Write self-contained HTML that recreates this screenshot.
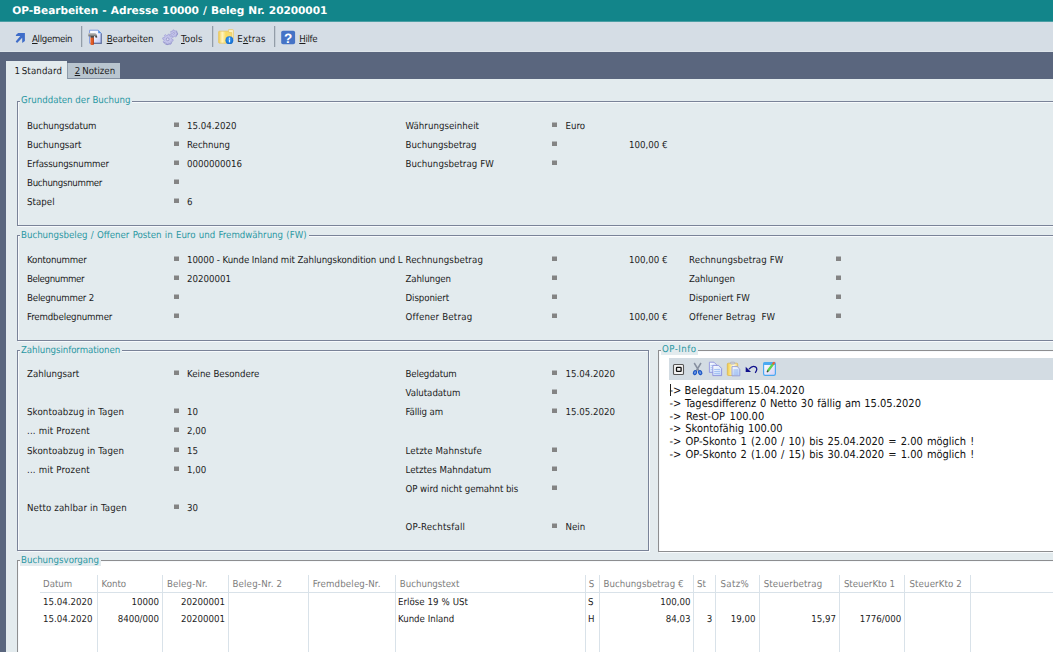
<!DOCTYPE html>
<html lang="de"><head><meta charset="utf-8"><title>OP-Bearbeiten</title>
<style>
html,body{margin:0;padding:0}
body{width:1053px;height:652px;overflow:hidden;position:relative;background:#e3ebee;font-family:"DejaVu Sans Condensed","Liberation Sans",sans-serif;font-size:9.6px;color:#1c1c1c;text-rendering:geometricPrecision}
.t{position:absolute;white-space:nowrap;line-height:12px;height:12px}
.b{position:absolute;width:5px;height:4px;background:#848484;border-top:1px solid #b4b8ba}
#title{position:absolute;left:0;top:0;width:1053px;height:21px;background:#12858a;border-bottom:1px solid #4b9ea4}
#title .t{color:#fff;font-weight:bold;font-family:"DejaVu Sans","Liberation Sans",sans-serif;font-size:10.6px;line-height:13px;height:13px}
#tb{position:absolute;left:0;top:22px;width:1053px;height:30px;background:#d5dde5;border-bottom:1px solid #dde4ea;box-sizing:border-box}
#band{position:absolute;left:0;top:52px;width:1053px;height:27px;background:#5a667e}
#edge{position:absolute;left:0;top:52px;width:6px;height:600px;background:#5a667e}
#tab1{position:absolute;left:6px;top:61px;width:61px;height:20px;background:#e3ebee}
#tab2{position:absolute;left:67px;top:63px;width:53px;height:16px;background:#b9c5cf;box-sizing:border-box;border-left:1px solid #8f9caa;border-bottom:1px solid #8592a3}
.gb{position:absolute;border:1px solid #7a8398;box-sizing:border-box;box-shadow:1px 1px 0 #f7fafc, inset 1px 1px 0 #f7fafc}
.lg{position:absolute;white-space:nowrap;line-height:9.5px;height:9.5px;color:#2b98a3;background:#e3ebee;padding:0 2px 0 1px}
.sep{position:absolute;top:26px;width:1px;height:21px;background:#939da8;box-shadow:1px 0 0 #c3ccd5}
u{text-decoration:underline}
#grid{position:absolute;left:18px;top:561px;width:1035px;height:91px;background:#fff}
.vl{position:absolute;top:575px;width:1px;height:77px;background:#d9e2e9}
#hl{position:absolute;left:40px;top:592px;width:1013px;height:1px;background:#d9e2e9}
.h{color:#7d7d7d}
#opw{position:absolute;left:659px;top:351px;width:394px;height:200px;background:#fff}
#optb{position:absolute;left:669px;top:358px;width:384px;height:22px;background:#d3dce3}
.o{font-size:11px;line-height:13px;height:13px;color:#111}
.ic{position:absolute}
</style></head><body>
<div id="title"><div class="t" style="left:12.3px;top:4.93px;word-spacing:0.5px;letter-spacing:-0.07px">OP-Bearbeiten - Adresse 10000 / Beleg Nr. 20200001</div>
</div>
<div id="tb"></div>
<div class="t" style="left:32px;top:33.78px;letter-spacing:-0.32px"><u>A</u>llgemein</div>
<div class="t" style="left:106.7px;top:33.78px;letter-spacing:-0.08px"><u>B</u>earbeiten</div>
<div class="t" style="left:181px;top:33.78px;letter-spacing:0.1px"><u>T</u>ools</div>
<div class="t" style="left:237.3px;top:33.78px;letter-spacing:0.2px">E<u>x</u>tras</div>
<div class="t" style="left:299.3px;top:33.78px;letter-spacing:-0.35px"><u>H</u>ilfe</div>
<div class="sep" style="left:81px"></div>
<div class="sep" style="left:212px"></div>
<div class="sep" style="left:274px"></div>
<svg class="ic" style="left:0;top:21px" width="330" height="31" viewBox="0 21 330 31">
<defs>
<linearGradient id="gdoc" x1="0" y1="0" x2="1" y2="1"><stop offset="0" stop-color="#ffffff"/><stop offset="0.45" stop-color="#f4f4ff"/><stop offset="1" stop-color="#b9c3f2"/></linearGradient>
<linearGradient id="ghd" x1="0" y1="0" x2="0" y2="1"><stop offset="0" stop-color="#c9c9c9"/><stop offset="0.5" stop-color="#8a8a8a"/><stop offset="1" stop-color="#151515"/></linearGradient>
<linearGradient id="ghn" x1="0" y1="0" x2="1" y2="0"><stop offset="0" stop-color="#e0521c"/><stop offset="0.5" stop-color="#e8662c"/><stop offset="1" stop-color="#a92a08"/></linearGradient>
<linearGradient id="gfo" x1="0" y1="0" x2="1" y2="0"><stop offset="0" stop-color="#f1c94e"/><stop offset="0.28" stop-color="#fff4c0"/><stop offset="0.55" stop-color="#f8dc62"/><stop offset="1" stop-color="#f6db7a"/></linearGradient>
<radialGradient id="gbl" cx="0.45" cy="0.4" r="0.7"><stop offset="0" stop-color="#3aa0f4"/><stop offset="1" stop-color="#0a5fc8"/></radialGradient>
</defs>
<!-- arrow -->
<polygon points="18.1,33.1 24.9,33.1 24.9,40.9 22.2,42.9 22.2,37.8 17.1,43.1 15.7,41.5 20.3,36.1 15.9,36.1 15.9,35" fill="#3f6dc9"/>
<!-- document + hammer -->
<path d="M89.6,30.2 H98.2 L101.2,33.2 V43.3 H89.6 Z" fill="url(#gdoc)" stroke="#7f9ade" stroke-width="1"/>
<path d="M98.2,30.2 L101.2,33.2 H98.2 Z" fill="#4f8fe6"/>
<path d="M101.3,33.5 V43.4 H93.5" fill="none" stroke="#66759f" stroke-width="1.1"/>
<rect x="90.5" y="37.2" width="3.4" height="7.7" rx="0.9" fill="url(#ghn)"/>
<path d="M88.3,33.6 Q88.3,33 89,33 H94.5 Q97.3,33.2 97.2,37.6 H95.6 Q95.6,35.8 94,35.9 V37.4 H90.4 V36.2 H88.3 Z" fill="url(#ghd)"/>
<!-- gears -->
<g stroke-linejoin="round">
<path d="M171.79,39.20 L173.19,39.71 L172.89,41.17 L171.41,41.10 L170.80,42.01 L171.42,43.36 L170.18,44.19 L169.18,43.08 L168.10,43.29 L167.59,44.69 L166.13,44.39 L166.20,42.91 L165.29,42.30 L163.94,42.92 L163.11,41.68 L164.22,40.68 L164.01,39.60 L162.61,39.09 L162.91,37.63 L164.39,37.70 L165.00,36.79 L164.38,35.44 L165.62,34.61 L166.62,35.72 L167.70,35.51 L168.21,34.11 L169.67,34.41 L169.60,35.89 L170.51,36.50 L171.86,35.88 L172.69,37.12 L171.58,38.12Z" fill="#c3c3ea" stroke="#a6a6d8" stroke-width="0.9"/>
<path d="M163.8,42.4 A5.1,5.1 0 0 0 172.2,42.2" fill="none" stroke="#8c8cc6" stroke-width="0.8"/>
<circle cx="167.7" cy="39.3" r="1.4" fill="#dcdcf4" stroke="#8a8ac2" stroke-width="0.7"/>
<path d="M176.55,33.10 L177.59,33.37 L177.47,34.56 L176.40,34.62 L175.95,35.36 L176.38,36.35 L175.38,36.99 L174.66,36.19 L173.80,36.30 L173.30,37.25 L172.17,36.87 L172.35,35.81 L171.73,35.20 L170.67,35.41 L170.26,34.29 L171.21,33.77 L171.29,32.90 L170.47,32.20 L171.09,31.19 L172.09,31.60 L172.82,31.13 L172.86,30.05 L174.04,29.90 L174.34,30.94 L175.16,31.21 L176.02,30.57 L176.88,31.40 L176.26,32.28Z" fill="#c3c3ea" stroke="#a6a6d8" stroke-width="0.9"/>
<path d="M176.6,31.4 A3.6,3.6 0 0 1 176.3,36.2" fill="none" stroke="#8c8cc6" stroke-width="0.8"/>
<circle cx="173.7" cy="33.4" r="0.9" fill="#d8d8f2" stroke="#9090c8" stroke-width="0.6"/>
</g>
<!-- folder + info -->
<path d="M228.6,29.6 H232.6 Q233.4,29.6 233.4,30.4 V39 H228.6 Z" fill="#fdf3c2" stroke="#e9c868" stroke-width="0.8"/>
<path d="M218.6,32 Q218.6,31.2 219.4,31.2 H228 L229,32.6 H231.8 V43.2 H219.6 Q218.6,43.2 218.6,42.2 Z" fill="url(#gfo)" stroke="#e8c45a" stroke-width="0.7"/>
<circle cx="229.4" cy="40.2" r="3.9" fill="url(#gbl)"/>
<rect x="228.9" y="39.4" width="1.2" height="3" fill="#e8f4ff"/><rect x="228.9" y="37.6" width="1.2" height="1.2" fill="#e8f4ff"/>
<!-- help -->
<rect x="281.2" y="30.7" width="13.9" height="13.5" rx="1.8" fill="#4573c6"/>
<text x="288.2" y="42.7" font-family="Liberation Sans, sans-serif" font-weight="bold" font-size="13.5" fill="#ffffff" text-anchor="middle">?</text>
</svg>

<div id="band"></div><div id="edge"></div><div id="tab2"></div><div id="tab1"></div>
<div class="t" style="left:14.5px;top:65.78px;word-spacing:-1.3px;letter-spacing:0.15px">1 Standard</div>
<div class="t" style="left:74.7px;top:65.78px;word-spacing:-0.6px"><u>2</u> Notizen</div>
<div class="gb" style="left:17px;top:101px;width:1050px;height:125px;border-color:#7a8398"></div>
<div class="lg" style="left:20px;top:96.03px;">Grunddaten der Buchung</div>
<div class="gb" style="left:17px;top:235px;width:1050px;height:106px;border-color:#7a8398"></div>
<div class="lg" style="left:20px;top:231.03px;word-spacing:0.55px;">Buchungsbeleg / Offener Posten in Euro und Fremdwährung (FW)</div>
<div class="gb" style="left:17px;top:350px;width:632px;height:201px;border-color:#7a8398"></div>
<div class="lg" style="left:20px;top:346.03px;letter-spacing:-0.07px;">Zahlungsinformationen</div>
<div id="opw"></div><div id="optb"></div>
<div class="gb" style="left:658px;top:350px;width:400px;height:202px;border-color:#8d8e90"></div>
<div class="lg" style="left:661px;top:345.03px;letter-spacing:0.45px;">OP-Info</div>
<div id="grid"></div>
<div class="gb" style="left:17px;top:560px;width:1050px;height:100px;border-color:#8d8e90"></div>
<div class="lg" style="left:20px;top:556.03px;">Buchungsvorgang</div>
<div class="t" style="left:27px;top:120.78px;letter-spacing:-0.086px">Buchungsdatum</div>
<i class="b" style="left:174px;top:122px"></i>
<div class="t" style="left:187px;top:120.78px;">15.04.2020</div>
<div class="t" style="left:27px;top:139.78px;letter-spacing:-0.028px">Buchungsart</div>
<i class="b" style="left:174px;top:141px"></i>
<div class="t" style="left:187px;top:139.78px;">Rechnung</div>
<div class="t" style="left:27px;top:158.78px;letter-spacing:-0.128px">Erfassungsnummer</div>
<i class="b" style="left:174px;top:160px"></i>
<div class="t" style="left:187px;top:158.78px;">0000000016</div>
<div class="t" style="left:27px;top:177.78px;letter-spacing:-0.293px">Buchungsnummer</div>
<i class="b" style="left:174px;top:179px"></i>
<div class="t" style="left:27px;top:196.78px;letter-spacing:0.050px">Stapel</div>
<i class="b" style="left:174px;top:198px"></i>
<div class="t" style="left:187px;top:196.78px;">6</div>
<div class="t" style="left:405.5px;top:120.78px;letter-spacing:0.040px">Währungseinheit</div>
<i class="b" style="left:552px;top:122px"></i>
<div class="t" style="left:565.5px;top:120.78px;">Euro</div>
<div class="t" style="left:405.5px;top:139.78px;letter-spacing:0.006px">Buchungsbetrag</div>
<i class="b" style="left:552px;top:141px"></i>
<div class="t" style="right:385.5px;top:139.78px;">100,00 €</div>
<div class="t" style="left:405.5px;top:158.78px;letter-spacing:0.058px">Buchungsbetrag FW</div>
<i class="b" style="left:552px;top:160px"></i>
<div class="t" style="left:27px;top:254.78px;letter-spacing:-0.141px">Kontonummer</div>
<i class="b" style="left:174px;top:256px"></i>
<div class="t" style="left:187px;top:254.78px;letter-spacing:-0.062px">10000 - Kunde Inland mit Zahlungskondition und L</div>
<div class="t" style="left:27px;top:273.78px;letter-spacing:-0.346px">Belegnummer</div>
<i class="b" style="left:174px;top:275px"></i>
<div class="t" style="left:187px;top:273.78px;">20200001</div>
<div class="t" style="left:27px;top:292.78px;letter-spacing:-0.169px">Belegnummer 2</div>
<i class="b" style="left:174px;top:294px"></i>
<div class="t" style="left:27px;top:311.78px;letter-spacing:-0.136px">Fremdbelegnummer</div>
<i class="b" style="left:174px;top:313px"></i>
<div class="t" style="left:405.5px;top:254.78px;letter-spacing:0.100px">Rechnungsbetrag</div>
<i class="b" style="left:552px;top:256px"></i>
<div class="t" style="right:385.5px;top:254.78px;">100,00 €</div>
<div class="t" style="left:405.5px;top:273.78px;letter-spacing:-0.100px">Zahlungen</div>
<i class="b" style="left:552px;top:275px"></i>
<div class="t" style="left:405.5px;top:292.78px;letter-spacing:-0.085px">Disponiert</div>
<i class="b" style="left:552px;top:294px"></i>
<div class="t" style="left:405.5px;top:311.78px;letter-spacing:0.189px">Offener Betrag</div>
<i class="b" style="left:552px;top:313px"></i>
<div class="t" style="right:385.5px;top:311.78px;">100,00 €</div>
<div class="t" style="left:689px;top:254.78px;letter-spacing:0.125px">Rechnungsbetrag FW</div>
<i class="b" style="left:836px;top:256px"></i>
<div class="t" style="left:689px;top:273.78px;letter-spacing:-0.050px">Zahlungen</div>
<i class="b" style="left:836px;top:275px"></i>
<div class="t" style="left:689px;top:292.78px;letter-spacing:0.001px">Disponiert FW</div>
<i class="b" style="left:836px;top:294px"></i>
<div class="t" style="left:689px;top:311.78px;letter-spacing:0.176px">Offener Betrag&nbsp; FW</div>
<i class="b" style="left:836px;top:313px"></i>
<div class="t" style="left:27px;top:368.78px;letter-spacing:-0.006px">Zahlungsart</div>
<i class="b" style="left:174px;top:370px"></i>
<div class="t" style="left:187px;top:368.78px;">Keine Besondere</div>
<div class="t" style="left:27px;top:406.78px;letter-spacing:0.140px">Skontoabzug in Tagen</div>
<i class="b" style="left:174px;top:408px"></i>
<div class="t" style="left:187px;top:406.78px;">10</div>
<div class="t" style="left:27px;top:425.78px;letter-spacing:0.180px">... mit Prozent</div>
<i class="b" style="left:174px;top:427px"></i>
<div class="t" style="left:187px;top:425.78px;">2,00</div>
<div class="t" style="left:27px;top:445.78px;letter-spacing:0.140px">Skontoabzug in Tagen</div>
<i class="b" style="left:174px;top:447px"></i>
<div class="t" style="left:187px;top:445.78px;">15</div>
<div class="t" style="left:27px;top:464.78px;letter-spacing:0.180px">... mit Prozent</div>
<i class="b" style="left:174px;top:466px"></i>
<div class="t" style="left:187px;top:464.78px;">1,00</div>
<div class="t" style="left:27px;top:502.78px;letter-spacing:0.119px">Netto zahlbar in Tagen</div>
<i class="b" style="left:174px;top:504px"></i>
<div class="t" style="left:187px;top:502.78px;">30</div>
<div class="t" style="left:405.5px;top:368.78px;letter-spacing:-0.145px">Belegdatum</div>
<i class="b" style="left:552px;top:370px"></i>
<div class="t" style="left:565.5px;top:368.78px;">15.04.2020</div>
<div class="t" style="left:405.5px;top:387.78px;letter-spacing:-0.018px">Valutadatum</div>
<i class="b" style="left:552px;top:389px"></i>
<div class="t" style="left:405.5px;top:406.78px;letter-spacing:-0.100px">Fällig am</div>
<i class="b" style="left:552px;top:408px"></i>
<div class="t" style="left:565.5px;top:406.78px;">15.05.2020</div>
<div class="t" style="left:405.5px;top:445.78px;letter-spacing:0.110px">Letzte Mahnstufe</div>
<i class="b" style="left:552px;top:447px"></i>
<div class="t" style="left:405.5px;top:464.78px;letter-spacing:0.017px">Letztes Mahndatum</div>
<i class="b" style="left:552px;top:466px"></i>
<div class="t" style="left:405.5px;top:483.78px;letter-spacing:-0.051px">OP wird nicht gemahnt bis</div>
<i class="b" style="left:552px;top:485px"></i>
<div class="t" style="left:405.5px;top:521.78px;letter-spacing:0.209px">OP-Rechtsfall</div>
<i class="b" style="left:552px;top:523px"></i>
<div class="t" style="left:565.5px;top:521.78px;">Nein</div>
<div class="t o" style="left:669.5px;top:383.79px;word-spacing:0px">-&gt; Belegdatum 15.04.2020</div>
<div class="t o" style="left:669.5px;top:396.79px;word-spacing:0.55px">-&gt; Tagesdifferenz 0 Netto 30 fällig am 15.05.2020</div>
<div class="t o" style="left:669.5px;top:409.79px;word-spacing:1.4px">-&gt; Rest-OP 100.00</div>
<div class="t o" style="left:669.5px;top:421.79px;word-spacing:0.75px">-&gt; Skontofähig 100.00</div>
<div class="t o" style="left:669.5px;top:434.79px;word-spacing:1px">-&gt; OP-Skonto 1 (2.00 / 10) bis 25.04.2020 = 2.00 möglich !</div>
<div class="t o" style="left:669.5px;top:447.79px;word-spacing:1px">-&gt; OP-Skonto 2 (1.00 / 15) bis 30.04.2020 = 1.00 möglich !</div>
<div style="position:absolute;left:670px;top:384px;width:1px;height:12px;background:#222"></div>
<svg class="ic" style="left:669px;top:358px" width="120" height="22" viewBox="669 358 120 22">
<defs>
<linearGradient id="gd2" x1="0" y1="0" x2="0.6" y2="1"><stop offset="0" stop-color="#ffffff"/><stop offset="1" stop-color="#c4d8fa"/></linearGradient>
<linearGradient id="gcb" x1="0" y1="0" x2="1" y2="0"><stop offset="0" stop-color="#efc84a"/><stop offset="0.3" stop-color="#fbe68a"/><stop offset="0.6" stop-color="#fffbe6"/><stop offset="1" stop-color="#ecd078"/></linearGradient>
<linearGradient id="ged" x1="0" y1="0" x2="1" y2="1"><stop offset="0" stop-color="#ffffff"/><stop offset="1" stop-color="#d5d0f5"/></linearGradient>
</defs>
<!-- box -->
<rect x="673.5" y="364.5" width="10" height="10" rx="1" fill="#f3f3f3" stroke="#565656" stroke-width="1.1"/>
<rect x="676.5" y="367.4" width="4.6" height="3.9" rx="0.6" fill="#f4f4f4" stroke="#101010" stroke-width="1.3"/>
<!-- scissors -->
<path d="M694.2,363 L699.3,371.5 M701,363 L695.9,371.5" stroke="#8790a0" stroke-width="1.5" fill="none"/>
<ellipse cx="695" cy="372.6" rx="1.5" ry="2" fill="#6f9ae6" stroke="#1d57c4" stroke-width="1.2" transform="rotate(25 695 372.6)"/>
<ellipse cx="700.2" cy="372.6" rx="1.5" ry="2" fill="#6f9ae6" stroke="#1d57c4" stroke-width="1.2" transform="rotate(-25 700.2 372.6)"/>
<!-- copy -->
<path d="M709.4,362.2 H714 L716.4,364.6 V372.4 H709.4 Z" fill="url(#gd2)" stroke="#8f93de" stroke-width="0.9"/>
<path d="M710.6,365.5 H713 M710.6,367.5 H712.4 M710.6,369.5 H712.4" stroke="#a9c6f3" stroke-width="0.8"/>
<path d="M712.8,365.4 H718.6 L721.6,368.4 V375.6 H712.8 Z" fill="url(#gd2)" stroke="#8a8edb" stroke-width="0.9"/>
<path d="M714.2,369.5 H720 M714.2,371.5 H720 M714.2,373.5 H720" stroke="#9fc0f2" stroke-width="0.9"/>
<!-- paste -->
<rect x="727.3" y="363.2" width="10.4" height="12.3" rx="1" fill="url(#gcb)" stroke="#d8b350" stroke-width="0.7"/>
<rect x="730.4" y="362" width="4.4" height="2.2" rx="1" fill="#c9ccd4" stroke="#a8abb6" stroke-width="0.5"/>
<path d="M732,366.6 H737.2 L739.8,369.2 V375.8 H732 Z" fill="url(#gd2)" stroke="#8f9ad8" stroke-width="0.9"/>
<path d="M733.4,370 H738.4 M733.4,372 H738.4 M733.4,374 H738.4" stroke="#86aeec" stroke-width="0.9"/>
<!-- undo -->
<polygon points="745.7,366.8 745.7,372 751,372" fill="#10108c"/>
<path d="M749,369.2 Q752.2,365.3 755.4,366.8 Q758.3,368.8 755.2,372.8" fill="none" stroke="#10108c" stroke-width="1.3"/>
<!-- edit -->
<rect x="763.6" y="362.6" width="11.8" height="12.8" rx="1.6" fill="url(#ged)" stroke="#4aa9f2" stroke-width="1.2"/>
<rect x="763.4" y="362.2" width="12.2" height="2.8" rx="1.2" fill="#4aa9f2"/>
<path d="M768.2,370.4 L773.3,363.8" stroke="#5fd44e" stroke-width="2.4" stroke-linecap="round"/>
<path d="M773.3,363.6 L773.9,362.8" stroke="#ee5a40" stroke-width="2.2" stroke-linecap="round"/>
<path d="M767.3,371.7 L767.9,370.9" stroke="#3a3a3a" stroke-width="1.3" stroke-linecap="round"/>
</svg>

<div class="vl" style="left:97px"></div>
<div class="vl" style="left:162px"></div>
<div class="vl" style="left:228px"></div>
<div class="vl" style="left:308px"></div>
<div class="vl" style="left:395px"></div>
<div class="vl" style="left:585px"></div>
<div class="vl" style="left:599px"></div>
<div class="vl" style="left:693px"></div>
<div class="vl" style="left:715px"></div>
<div class="vl" style="left:759px"></div>
<div class="vl" style="left:839px"></div>
<div class="vl" style="left:904px"></div>
<div class="vl" style="left:970px"></div>
<div id="hl"></div>
<div class="t h" style="left:43px;top:578.78px;letter-spacing:0px">Datum</div>
<div class="t h" style="left:101.5px;top:578.78px;letter-spacing:0px">Konto</div>
<div class="t h" style="left:167px;top:578.78px;letter-spacing:0.15px">Beleg-Nr.</div>
<div class="t h" style="left:232.4px;top:578.78px;letter-spacing:0.2px">Beleg-Nr. 2</div>
<div class="t h" style="left:312.7px;top:578.78px;letter-spacing:0.15px">Fremdbeleg-Nr.</div>
<div class="t h" style="left:399.8px;top:578.78px;letter-spacing:0px">Buchungstext</div>
<div class="t h" style="left:588.8px;top:578.78px;letter-spacing:0px">S</div>
<div class="t h" style="left:603.5px;top:578.78px;letter-spacing:0.05px">Buchungsbetrag €</div>
<div class="t h" style="left:697px;top:578.78px;letter-spacing:0px">St</div>
<div class="t h" style="left:720.6px;top:578.78px;letter-spacing:0.3px">Satz%</div>
<div class="t h" style="left:763.7px;top:578.78px;letter-spacing:0.13px">Steuerbetrag</div>
<div class="t h" style="left:843.9px;top:578.78px;letter-spacing:0px">SteuerKto 1</div>
<div class="t h" style="left:909.5px;top:578.78px;letter-spacing:0.13px">SteuerKto 2</div>
<div class="t" style="left:43px;top:596.78px;">15.04.2020</div>
<div class="t" style="right:894px;top:596.78px;">10000</div>
<div class="t" style="right:828px;top:596.78px;">20200001</div>
<div class="t" style="left:398px;top:596.78px;word-spacing:0.3px">Erlöse 19 % USt</div>
<div class="t" style="left:588px;top:596.78px;">S</div>
<div class="t" style="right:362.5px;top:596.78px;">100,00</div>
<div class="t" style="left:43px;top:613.78px;">15.04.2020</div>
<div class="t" style="right:894px;top:613.78px;">8400/000</div>
<div class="t" style="right:828px;top:613.78px;">20200001</div>
<div class="t" style="left:398px;top:613.78px;">Kunde Inland</div>
<div class="t" style="left:588px;top:613.78px;">H</div>
<div class="t" style="right:362.5px;top:613.78px;">84,03</div>
<div class="t" style="right:340.7px;top:613.78px;">3</div>
<div class="t" style="right:297.6px;top:613.78px;">19,00</div>
<div class="t" style="right:217px;top:613.78px;">15,97</div>
<div class="t" style="right:151.8px;top:613.78px;">1776/000</div>
</body></html>
